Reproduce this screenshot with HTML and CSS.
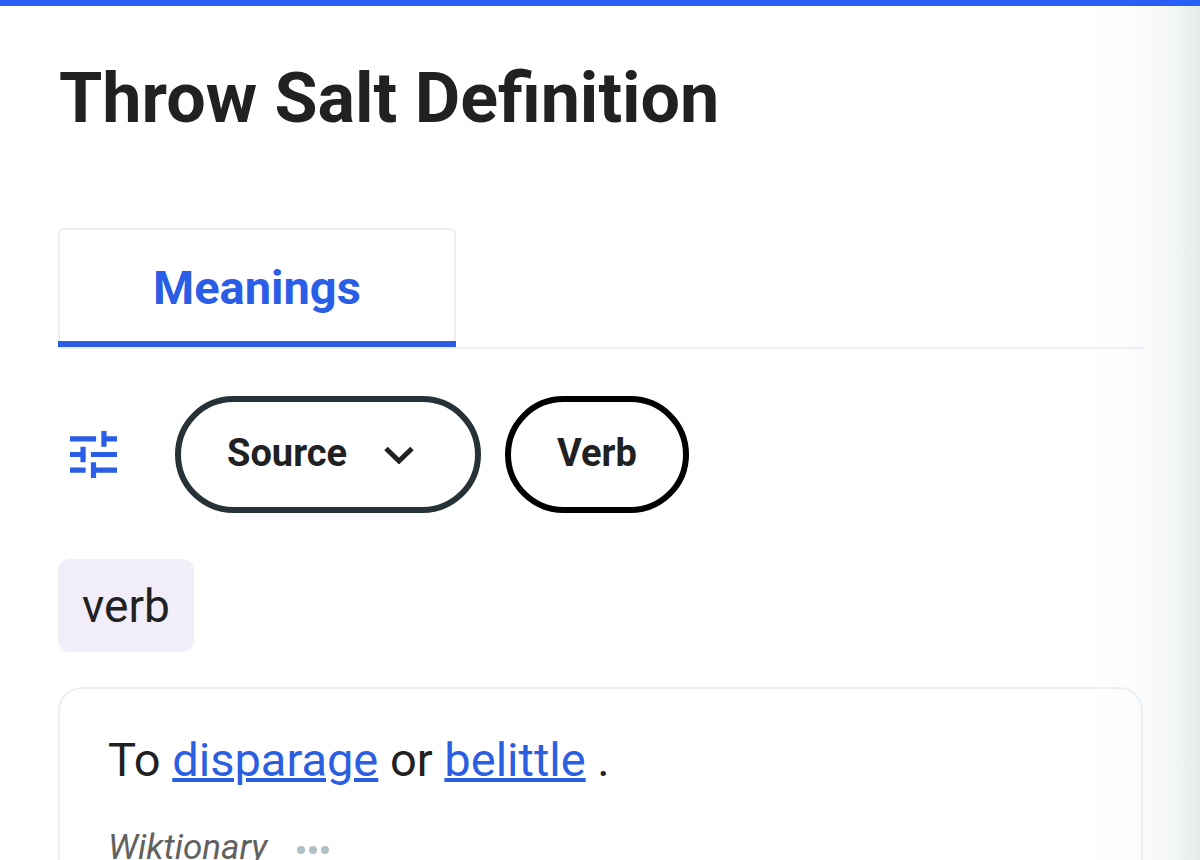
FILE: index.html
```html
<!DOCTYPE html>
<html lang="en">
<head>
<meta charset="utf-8">
<meta name="viewport" content="width=device-width, initial-scale=1">
<title>Throw Salt Definition</title>
<link rel="stylesheet" href="styles.css">
</head>
<body>
<main class="page">
  <h1 class="title">Throw Salt Definition</h1>
  <nav class="tabs">
    <a class="tab" href="#meanings"><span class="tab-label">Meanings</span></a>
  </nav>
  <div class="filters">
    <svg class="tune" viewBox="3 3 18 18" aria-hidden="true"><path d="M3 17v2h6v-2H3zM3 5v2h10V5H3zm10 16v-2h8v-2h-8v-2h-2v6h2zM7 9v2H3v2h4v2h2V9H7zm14 4v-2H11v2h10zm-6-4h2V7h4V5h-4V3h-2v6z"/></svg>
    <button class="pill pill-source" type="button"><span class="pill-label">Source</span>
      <svg class="chevron" viewBox="0 0 30 18" aria-hidden="true"><path d="M2 2.5 15 15 28 2.5"/></svg>
    </button>
    <button class="pill" type="button"><span class="pill-label">Verb</span></button>
  </div>
  <section id="meanings">
    <h2 class="tag">verb</h2>
    <article class="card">
      <p class="meaning">To <a href="#disparage">disparage</a> or <a href="#belittle">belittle</a> .</p>
      <div class="source">
        <span>Wiktionary</span>
        <button class="more" type="button" aria-label="More">
          <svg viewBox="0 0 32 8" aria-hidden="true"><circle cx="4" cy="4" r="4"/><circle cx="16" cy="4" r="4"/><circle cx="28" cy="4" r="4"/></svg>
        </button>
      </div>
    </article>
  </section>
</main>
</body>
</html>
```

FILE: styles.css
```css
* {
  box-sizing: border-box;
}

body {
  margin: 0;
  font-family: Roboto, "Liberation Sans", sans-serif;
  color: #212121;
  background: #fff;
}

.page {
  height: 100vh;
  overflow: hidden;
  padding: 52px 57px 0 58px;
  border-top: 6px solid #285ff5;
  background: linear-gradient(to left, #e5eaea 0, #f1f4f5 22px, #f8f9fb 45px, #fcfdfd 75px, #fff 120px);
}

.title {
  margin: 0 0 90px;
  padding-left: 1px;
  font-size: 70px;
  line-height: 80px;
  font-weight: 700;
}

.tabs {
  display: flex;
  border-bottom: 2px solid #eceff1;
}

.tab {
  border-bottom: 6px solid #2b5ce2;
  color: #2b5ee6;
  text-decoration: none;
}

.tab-label {
  display: block;
  padding: 29px 93px 24px;
  border: 2px solid #eceff1;
  border-bottom: 0;
  border-radius: 6px 6px 0 0;
  background: #fff;
  font-size: 47px;
  line-height: 58px;
  font-weight: 700;
}

.filters {
  display: flex;
  align-items: center;
  gap: 24px;
  margin: 47px 0 46px;
  padding-left: 12px;
}

.tune {
  width: 47px;
  height: 47px;
  margin-right: 34px;
  fill: #2b5ee6;
}

.pill {
  display: flex;
  align-items: center;
  gap: 37px;
  height: 117px;
  padding: 0 46px;
  border: 6px solid #000;
  border-radius: 60px;
  background: #fff;
  color: #212121;
  font: 700 38px/48px Roboto, "Liberation Sans", sans-serif;
}

.pill-source {
  padding-right: 61px;
  border-color: #263238;
}

.pill-label {
  padding-bottom: 4px;
}

.chevron {
  width: 30px;
  height: 18px;
  fill: none;
  stroke: #212121;
  stroke-width: 5;
}

.tag {
  width: fit-content;
  margin: 0 0 35px;
  padding: 18px 24px 17px;
  border-radius: 12px;
  background: #f1eefa;
  font-size: 46px;
  line-height: 58px;
  font-weight: 400;
}

.card {
  padding: 39px 48px;
  border: 2px solid #eceff1;
  border-radius: 24px;
}

.meaning {
  margin: 0 0 32px;
  font-size: 47px;
  line-height: 64px;
}

.meaning a {
  color: #2b5ee0;
  text-decoration-thickness: 4px;
}

.source {
  display: flex;
  align-items: center;
  gap: 30px;
  color: #616161;
  font-size: 35px;
  line-height: 48px;
  font-style: italic;
}

.more {
  padding: 4px 0 0;
  border: 0;
  background: none;
}

.more svg {
  display: block;
  width: 32px;
  height: 8px;
  fill: #b0bec5;
}
```
